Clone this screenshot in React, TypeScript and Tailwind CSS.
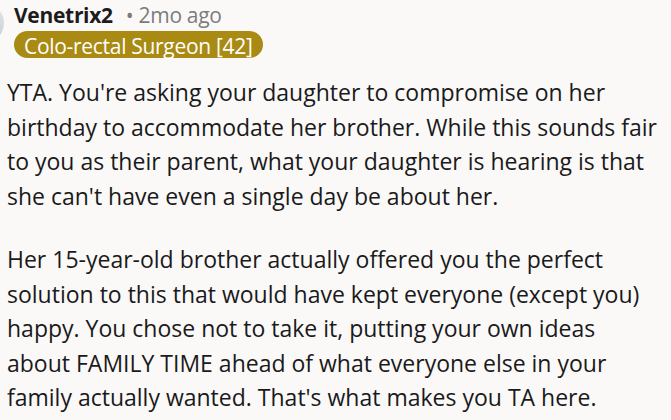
export default function App() {
  return (
    <div className="min-h-[420px] overflow-hidden bg-[#fbf9f8] font-['Open_Sans',sans-serif] text-[#1a1a1b]">
      <div className="flex items-start pt-[2px]">
        <div className="-ml-[36px] mt-[1px] h-[40px] w-[40px] shrink-0 rounded-full bg-gradient-to-b from-[#e4e7ea] to-[#c9cfd5]" />
        <div className="ml-[10px] flex flex-col items-start">
          <div className="flex items-baseline text-[21px] leading-[26px] tracking-[-0.3px]">
            <span className="font-bold text-[#1c1c1c]">Venetrix2</span>
            <span className="ml-[13px] text-[#7c7c7c]">• 2mo ago</span>
          </div>
          <span className="mt-[3px] h-[27px] rounded-full bg-[#a98a12] px-[10px] pt-[3px] text-[21px] leading-[24px] tracking-[-0.3px] text-white">
            Colo-rectal Surgeon [42]
          </span>
        </div>
      </div>
      <div className="mt-[17px] pl-[7px] text-[23px] leading-[34.6px]">
        <p>
          YTA. You're asking your daughter to compromise on her
          <br />
          birthday to accommodate her brother. While this sounds fair
          <br />
          to you as their parent, what your daughter is hearing is that
          <br />
          she can't have even a single day be about her.
        </p>
        <p className="mt-[28.6px]">
          Her 15-year-old brother actually offered you the perfect
          <br />
          solution to this that would have kept everyone (except you)
          <br />
          happy. You chose not to take it, putting your own ideas
          <br />
          about FAMILY TIME ahead of what everyone else in your
          <br />
          family actually wanted. That's what makes you TA here.
        </p>
      </div>
    </div>
  );
}
